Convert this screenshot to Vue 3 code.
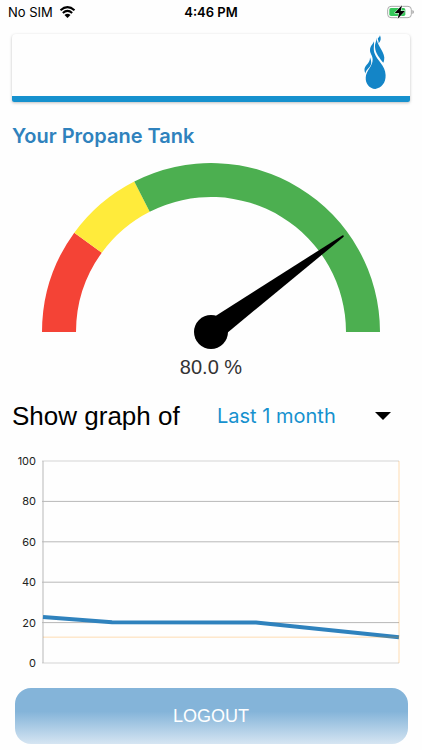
<!-- TankOverview.vue -->
<template>
  <div class="screen">
    <div class="status-bar">
      <div class="carrier">
        <span>No SIM</span>
        <svg class="wifi" viewBox="0 0 48 36" aria-label="Wi-Fi">
          <path d="M3 13 Q24 -6 45 13" />
          <path d="M10 21 Q24 8 38 21" />
          <path class="wifi-dot" d="M15 27 Q24 19 33 27 L24 36 Z" />
        </svg>
      </div>
      <span class="clock">4:46 PM</span>
      <div class="battery">
        <svg viewBox="0 0 81 42" aria-label="Battery charging">
          <rect class="battery-shell" x="2" y="4" width="71" height="34" rx="10" />
          <rect class="battery-level" x="7" y="9" width="48" height="24" rx="5" />
          <path class="battery-shell-tip" d="M76 15 Q81 17 81 21 Q81 25 76 27 Z" />
          <path class="bolt" d="M45 1 L23 24 H36 L32 41 L54 18 H41 Z" />
        </svg>
      </div>
    </div>

    <header class="brand-card">
      <svg class="flame" viewBox="460 104 66 166" aria-label="Flame logo">
        <path d="M494 267 C475 265 464 250 465 232 C466 211 486 199 486 178 C486 166 477 160 478 148 C479 136 487 132 490 123 C491 137 487 147 492 160 C499 181 524 195 525 225 C526 249 512 264 494 267 Z" />
        <path d="M498 112 C496 130 519 150 521 171 C521 178 520 184 518 188 C508 174 494 160 493 140 C492 130 497 124 498 112 Z" />
        <path d="M508 105 C512 114 511 122 504 129 C505 121 500 118 502 112 C504 114 506 111 508 105 Z" />
        <path d="M478 172 C485 189 481 196 473 204 C468 209 465 214 464 220 C459 209 461 202 468 194 C474 187 478 182 478 172 Z" />
      </svg>
    </header>

    <main>
      <h1 class="title">Your Propane Tank</h1>

      <svg class="gauge" viewBox="0 0 398 186" role="img" aria-label="Tank level">
        <path
          v-for="zone in zones"
          :key="zone.color"
          :d="arcPath(zone.from, zone.to)"
          :fill="zone.color"
        />
        <path class="needle" d="M199 158 L362 168 Q364 169 362 170 L199 180 Z" :transform="needleRotation" />
        <circle class="needle" cx="199" cy="169" r="17" />
      </svg>
      <div class="level">{{ level.toFixed(1) }} %</div>

      <div class="range-row">
        <label for="range-select">Show graph of</label>
        <div class="range-field">
          <select id="range-select" v-model="range" class="range-select">
            <option v-for="r in ranges" :key="r" :value="r">{{ r }}</option>
          </select>
          <svg class="caret" viewBox="0 0 16 8" aria-hidden="true">
            <path d="M0 0 H16 L8 8 Z" />
          </svg>
        </div>
      </div>

      <svg class="chart" viewBox="0 0 398 218" role="img" aria-label="Tank level history">
        <g v-for="tick in ticks" :key="tick">
          <text x="24" :y="chartY(tick) + 4" class="tick">{{ tick }}</text>
          <line
            x1="30"
            x2="387"
            :y1="chartY(tick)"
            :y2="chartY(tick)"
            :class="tick % 100 ? 'grid' : 'grid edge'"
          />
        </g>
        <line class="axis" x1="31" x2="31" :y1="chartY(100)" :y2="chartY(0)" />
        <polyline class="series" :points="seriesPoints" />
        <line class="marker" x1="31" x2="387" :y1="chartY(lastValue)" :y2="chartY(lastValue)" />
        <line class="marker" x1="387" x2="387" :y1="chartY(100)" :y2="chartY(0)" />
      </svg>

      <button type="button" class="logout-btn">LOGOUT</button>
    </main>
  </div>
</template>

<script setup>
import { ref, computed } from 'vue';

const level = ref(80);
const range = ref('Last 1 month');
const ranges = ['Last 1 month', 'Last 3 months', 'Last 6 months', 'Last 1 year'];

// Gauge zones in percent
const zones = [
  { from: 0, to: 20, color: '#f44336' },
  { from: 20, to: 35, color: '#ffeb3b' },
  { from: 35, to: 100, color: '#4caf50' }
];

const gaugePoint = (percent, radius) => {
  const angle = Math.PI * (1 - percent / 100);
  return `${199 + radius * Math.cos(angle)} ${169 - radius * Math.sin(angle)}`;
};

const arcPath = (from, to) => {
  const outer = 169;
  const inner = 135;
  return `M${gaugePoint(from, outer)} A${outer} ${outer} 0 0 1 ${gaugePoint(to, outer)} `
    + `L${gaugePoint(to, inner)} A${inner} ${inner} 0 0 0 ${gaugePoint(from, inner)} Z`;
};

const needleRotation = computed(() => `rotate(${(level.value / 100) * 180 - 180} 199 169)`);

// Chart
const ticks = [100, 80, 60, 40, 20, 0];
const readings = [
  { x: 31, value: 22.8 },
  { x: 100, value: 20.2 },
  { x: 244, value: 20 },
  { x: 387, value: 12.8 }
];
const lastValue = readings[readings.length - 1].value;

const chartY = (value) => 210 - value * 2.02;
const seriesPoints = computed(() => readings.map((p) => `${p.x},${chartY(p.value)}`).join(' '));
</script>

<style>
body {
  background: #fefefe;
}
</style>

<style scoped>
.screen {
  padding: 0 12px 6px;
  font-family: Inter, 'Liberation Sans', sans-serif;
  color: #000;
}

.status-bar {
  display: grid;
  grid-template-columns: 1fr auto 1fr;
  align-items: center;
  height: 24px;
  margin: 0 -4px;
  font-size: 13px;
}

.carrier {
  display: flex;
  align-items: center;
  gap: 6px;
}

.wifi {
  width: 17px;
  height: 12px;
  fill: none;
  stroke: #000;
  stroke-width: 6;
}

.wifi-dot {
  fill: #000;
  stroke: none;
}

.clock {
  font-weight: 600;
}

.battery {
  display: flex;
  justify-content: flex-end;
}

.battery svg {
  width: 27px;
  height: 14px;
}

.battery-shell {
  fill: none;
  stroke: #aaa;
  stroke-width: 3;
}

.battery-shell-tip {
  fill: #aaa;
}

.battery-level {
  fill: #34c759;
}

.bolt {
  fill: #000;
  stroke: #fff;
  stroke-width: 3;
  paint-order: stroke;
}

.brand-card {
  display: flex;
  justify-content: flex-end;
  margin-top: 10px;
  padding: 1px 24px 6px 0;
  border-bottom: 6px solid #1691ce;
  border-radius: 4px 4px 2px 2px;
  box-shadow: 0 1px 3px rgba(0, 0, 0, 0.25);
}

.flame {
  width: 22px;
  height: 55px;
  fill: #1485c7;
}

.title {
  margin: 22px 0 15px;
  font-size: 20px;
  line-height: 24px;
  font-weight: 600;
  color: #2f82bd;
}

.gauge {
  display: block;
  width: 100%;
}

.needle {
  fill: #000;
}

.level {
  margin-top: 6px;
  text-align: center;
  font-family: 'Liberation Sans', sans-serif;
  font-size: 20px;
  line-height: 24px;
  color: #333;
}

.range-row {
  display: flex;
  align-items: center;
  justify-content: space-between;
  margin-top: 19px;
  height: 36px;
}

.range-row label {
  font-family: 'Liberation Sans', sans-serif;
  font-size: 26px;
}

.range-field {
  position: relative;
  display: flex;
  align-items: center;
  width: 193px;
}

.range-select {
  appearance: none;
  width: 100%;
  padding: 0 40px 0 0;
  border: none;
  background: transparent;
  color: #1691ce;
  font-family: inherit;
  font-size: 20px;
  line-height: 28px;
  cursor: pointer;
}

.caret {
  position: absolute;
  right: 19px;
  width: 16px;
  height: 8px;
  pointer-events: none;
}

.chart {
  display: block;
  width: 100%;
  margin-top: 19px;
}

.tick {
  font-size: 11px;
  text-anchor: end;
  fill: #222;
}

.grid {
  stroke: #b8b8b8;
  stroke-width: 1;
}

.grid.edge {
  stroke: #d4d4d4;
}

.axis {
  stroke: #b8b8b8;
  stroke-width: 1;
}

.series {
  fill: none;
  stroke: #2f82bd;
  stroke-width: 4;
}

.marker {
  stroke: #ff8c00;
  stroke-opacity: 0.3;
  stroke-width: 1;
}

.logout-btn {
  display: block;
  width: calc(100% - 5px);
  height: 56px;
  margin: 17px auto 0;
  border: none;
  border-radius: 16px;
  background: linear-gradient(#84b4d9 0%, #84b4d9 42%, #d5e5f2 100%);
  color: #fff;
  font-family: 'Liberation Sans', sans-serif;
  font-size: 18px;
  cursor: pointer;
}
</style>
